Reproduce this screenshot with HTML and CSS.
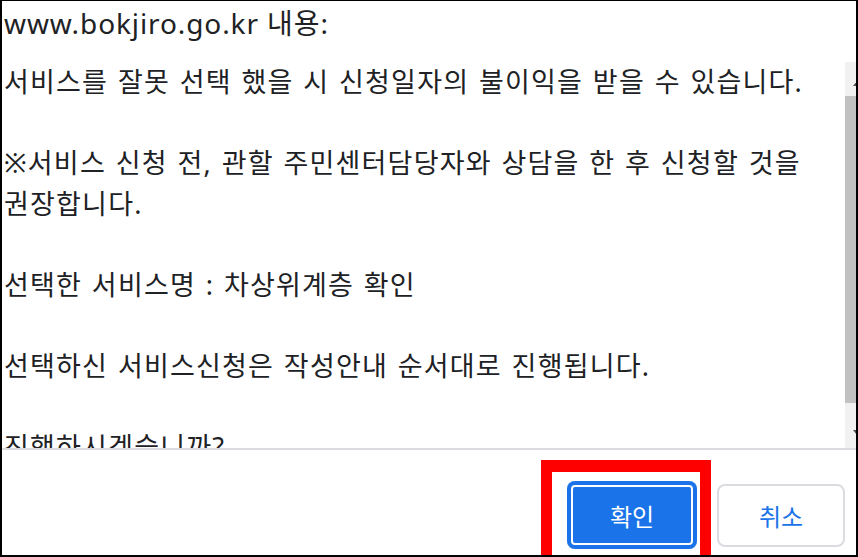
FILE: index.html
```html
<!DOCTYPE html>
<html lang="ko">
<head>
    <meta charset="UTF-8">
    <meta name="viewport" content="width=device-width, initial-scale=1.0">
    <title>www.bokjiro.go.kr 내용</title>
    <link rel="stylesheet" href="styles.css">
</head>
<body>

    <div class="frame">
        <div class="dialog">
            <h1 class="title">www.bokjiro.go.kr 내용:</h1>

            <div class="scroll-row">
                <div class="message">
                    <p>서비스를 잘못 선택 했을 시 신청일자의 불이익을 받을 수 있습니다.</p>
                    <p>※서비스 신청 전, 관할 주민센터담당자와 상담을 한 후 신청할 것을<br>권장합니다.</p>
                    <p>선택한 서비스명 : 차상위계층 확인</p>
                    <p>선택하신 서비스신청은 작성안내 순서대로 진행됩니다.</p>
                    <p>진행하시겠습니까?</p>
                </div>
                <div class="scrollbar">
                    <span class="arrow up"></span>
                    <span class="thumb"></span>
                    <span class="arrow down"></span>
                </div>
            </div>

            <div class="buttons">
                <button class="btn primary">확인</button>
                <button class="btn">취소</button>
            </div>
        </div>

        <div class="highlight"></div>
    </div>

</body>
</html>
```

FILE: styles.css
```css
body { margin: 0; background: #fff; font-family: "Noto Sans", "Noto Sans CJK KR", sans-serif; color: #202124; }
.frame { position: relative; width: 858px; height: 557px; box-sizing: border-box; border: 2px solid #000; border-top-width: 1px; overflow: hidden; }
.dialog { width: 880px; display: flex; flex-direction: column; }
.title { margin: 0; padding: 2px 0 0 2px; height: 59px; font-size: 28px; font-weight: normal; line-height: 40px; letter-spacing: 0.9px; }
.scroll-row { display: flex; height: 386px; border-bottom: 2px solid #dadce0; }
.message { flex: 0 0 841px; padding-left: 2px; overflow: hidden; font-size: 27px; line-height: 40.5px; letter-spacing: 1.2px; word-spacing: 1.5px; }
.message p { margin: 0 0 40.5px; white-space: nowrap; }
.scrollbar { position: relative; flex: 0 0 25px; background: #f1f1f1; }
.thumb { position: absolute; left: 0; right: 0; top: 34px; height: 307px; background: #c1c1c1; }
.arrow { position: absolute; left: 8px; width: 0; height: 0; border-left: 4px solid transparent; border-right: 4px solid transparent; }
.arrow.up { top: 19px; border-bottom: 5px solid #505050; }
.arrow.down { bottom: 13px; border-top: 5px solid #505050; }
.buttons { display: flex; justify-content: flex-end; align-items: center; gap: 20px; padding: 31px 37px 0 0; }
.btn { width: 128px; height: 63px; box-sizing: border-box; border: 2px solid #dadce0; border-radius: 8px; background: #fff; color: #1a73e8; font-family: "Noto Sans CJK KR", sans-serif; font-size: 24px; cursor: pointer; }
.btn.primary { width: 130px; height: 68px; border: none; background: #1a73e8; color: #fff; box-shadow: inset 0 0 0 4px #1a73e8, inset 0 0 0 6px #fff; }
.highlight { position: absolute; left: 539px; top: 459px; width: 148px; height: 90px; border: 11px solid #f00; border-top-width: 12px; }
```
